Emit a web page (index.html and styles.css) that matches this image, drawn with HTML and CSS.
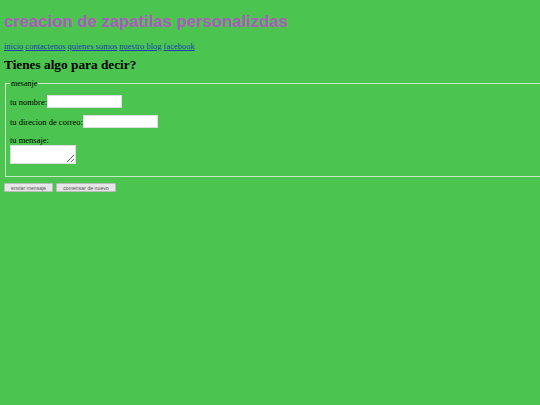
FILE: index.html
```html
<!DOCTYPE html>
<html lang="es">
<head>
<meta charset="utf-8">
<title>creacion de zapatillas personalizdas</title>
<link rel="stylesheet" href="styles.css">
</head>
<body>
<h1 class="title">creacion de zapatilas personalizdas</h1>
<nav class="nav">
<a href="#">inicio</a> <a href="#">contactenos</a> <a href="#">quienes somos</a> <a href="#">nuestro blog</a> <a href="#">facebook</a>
</nav>
<h2 class="subtitle">Tienes algo para decir?</h2>
<form class="form">
<fieldset class="box">
<legend class="legend">mesanje</legend>
<p class="row"><label>tu nombre:</label><input class="field" type="text"></p>
<p class="row"><label>tu direcion de correo:</label><input class="field" type="text"></p>
<p class="row col"><label>tu mensaje:</label><textarea class="area"></textarea></p>
</fieldset>
<div class="buttons">
<button type="submit" class="btn">enviar mensaje</button>
<button type="reset" class="btn">comensar de nuevo</button>
</div>
</form>
</body>
</html>
```
FILE: styles.css
```css
html {
  overflow: hidden;
}
html, body {
  margin: 0;
  background: #4bc54f;
}
body {
  padding: 4px;
  font-family: "Liberation Serif", serif;
  font-size: 8px;
  color: #000;
  width: 600px;
}
.title {
  font-family: "Liberation Sans", Arial, sans-serif;
  font-size: 16.7px;
  font-weight: bold;
  color: #b157c2;
  margin: 8px 0 9px;
}
.nav a {
  color: #1a3fae;
  font-size: 8.5px;
}
.subtitle {
  font-size: 13.3px;
  font-weight: bold;
  margin: 6px 0 6px;
}
.form {
  margin: 0;
}
.box {
  margin: 0 1px;
  padding: 0 4px 5px;
  border: 1px groove #c8e8c8;
}
.legend {
  padding: 0 1px;
  font-size: 8px;
}
.row {
  margin: 7px 0;
  display: flex;
  align-items: center;
  font-size: 8.5px;
}
.row.col {
  flex-direction: column;
  align-items: flex-start;
  margin-top: 5px;
}
.field {
  width: 73px;
  height: 11px;
  border: 1px solid #ddd;
  padding: 0;
  background: #fff;
}
.area {
  width: 64px;
  height: 17px;
  border: 1px solid #ddd;
  padding: 0;
  margin-top: 0;
  background: #fff;
}
.buttons {
  margin-top: 6px;
  display: flex;
  gap: 3px;
}
.btn {
  font-family: "Liberation Sans", Arial, sans-serif;
  font-size: 5.2px;
  height: 9px;
  padding: 0 6px;
  color: #555;
  background: #e6e6e6;
  border: 1px solid #bbb;
  border-radius: 1px;
}
```
